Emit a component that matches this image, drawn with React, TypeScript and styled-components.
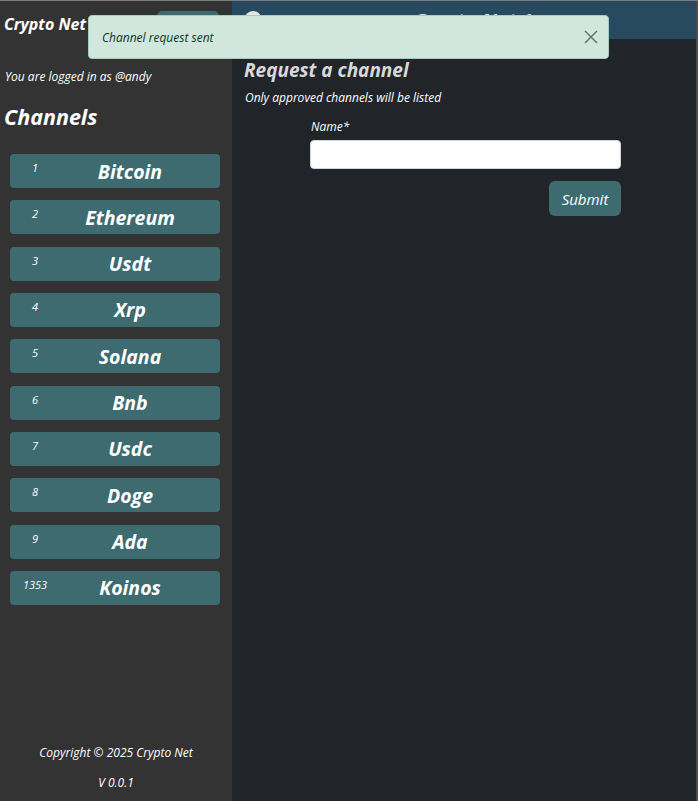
import React, {FC} from 'react';
import styled, {createGlobalStyle} from 'styled-components';

const GlobalStyle = createGlobalStyle`
  html, body {
    margin: 0;
    padding: 0;
    background: #212529;
  }
  body {
    font-family: "Open Sans", "Noto Sans", sans-serif;
    font-style: italic;
    color: #fff;
  }
  * { box-sizing: border-box; }
`;

const StyledPage = styled.div`
  position: relative;
  display: flex;
  height: 801px;
  border-top: 1px solid #7a7d80;
`;
const StyledSidebar = styled.aside`
  width: 232px;
  flex-shrink: 0;
  display: flex;
  flex-direction: column;
  background: #343333;
`;
const StyledBrandRow = styled.div`
  display: flex;
  align-items: center;
  justify-content: space-between;
  padding: 12px 13px 0 4px;
  height: 34px;
  > h1 {
    margin: 0;
    font-size: 16px;
    font-weight: 700;
  }
`;
const StyledSmallButton = styled.button`
  width: 62px;
  height: 26px;
  border: none;
  border-radius: 5px;
  background: #3d6b6f;
`;
const StyledLogged = styled.p`
  margin: 33px 0 0 5px;
  font-size: 12px;
`;
const StyledSideTitle = styled.h2`
  margin: 17px 0 0 4px;
  font-size: 21.5px;
  font-weight: 700;
`;
const StyledChannelList = styled.ul`
  list-style: none;
  margin: 23px 0 0;
  padding: 0 12px 0 10px;
  display: flex;
  flex-direction: column;
  gap: 12.33px;
`;
const StyledChannel = styled.li`
  display: grid;
  grid-template-columns: 50px 1fr;
  align-items: center;
  height: 34px;
  padding-right: 20px;
  border-radius: 4px;
  background: #3d6b6f;
  cursor: pointer;
  > span {
    align-self: start;
    padding-top: 6px;
    font-size: 11px;
    text-align: center;
  }
  > strong {
    text-align: center;
    font-size: 19.5px;
    font-weight: 700;
  }
`;
const StyledFooter = styled.footer`
  margin-top: auto;
  padding-bottom: 10px;
  text-align: center;
  font-size: 12px;
  > p {
    margin: 0 0 13px;
  }
  > p:last-child {
    margin: 0;
  }
`;
const StyledMain = styled.main`
  flex: 1;
  display: flex;
  flex-direction: column;
  border-right: 2px solid #4a4b4d;
`;
const StyledTopBar = styled.header`
  display: flex;
  align-items: center;
  height: 38px;
  padding: 0 12px;
  background: #284a60;
  > h1 {
    flex: 1;
    margin: 0;
    text-align: center;
    font-size: 20px;
    font-weight: 700;
    color: #e6e6e6;
  }
`;
const StyledAvatar = styled.div`
  width: 18px;
  height: 18px;
  border-radius: 50%;
  background: #e6e6e6;
`;
const StyledContent = styled.section`
  padding: 18px 12px;
  > h2 {
    margin: 0;
    font-size: 19px;
    font-weight: 700;
    color: #d9d9d9;
  }
  > p {
    margin: 6px 0 0 1px;
    font-size: 12px;
  }
`;
const StyledForm = styled.form`
  width: 311px;
  margin: 12px 0 0 66px;
  display: flex;
  flex-direction: column;
  > label {
    font-size: 12px;
    margin: 0 0 5px 1px;
  }
  > input {
    height: 29px;
    border: 1px solid #ced4da;
    border-radius: 4px;
    background: #fff;
  }
`;
const StyledSubmit = styled.button`
  align-self: flex-end;
  margin-top: 12px;
  width: 72px;
  height: 35px;
  border: none;
  border-radius: 6px;
  background: #3d6b6f;
  color: #fff;
  font-family: inherit;
  font-style: italic;
  font-size: 15px;
`;
const StyledToast = styled.div`
  position: absolute;
  left: 88px;
  top: 14px;
  width: 521px;
  height: 44px;
  display: flex;
  align-items: center;
  justify-content: space-between;
  padding: 0 10px 0 13px;
  border: 1px solid #a3cfbb;
  border-radius: 4px;
  background: #d1e7dd;
  color: #0a3622;
  font-size: 12px;
`;

type Channel = { id: number, name: string }

const channels: Channel[] = [
  {id: 1, name: 'Bitcoin'},
  {id: 2, name: 'Ethereum'},
  {id: 3, name: 'Usdt'},
  {id: 4, name: 'Xrp'},
  {id: 5, name: 'Solana'},
  {id: 6, name: 'Bnb'},
  {id: 7, name: 'Usdc'},
  {id: 8, name: 'Doge'},
  {id: 9, name: 'Ada'},
  {id: 1353, name: 'Koinos'},
];

const CloseIcon: FC = () => (
  <svg width="14" height="14" viewBox="0 0 14 14">
    <path d="M1 1L13 13M13 1L1 13" stroke="#5a6e64" strokeWidth="1.4" fill="none"/>
  </svg>
);

const App: FC = () => {
  return (
    <StyledPage>
      <GlobalStyle/>
      <StyledSidebar>
        <StyledBrandRow>
          <h1>Crypto Net</h1>
          <StyledSmallButton/>
        </StyledBrandRow>
        <StyledLogged>You are logged in as @andy</StyledLogged>
        <StyledSideTitle>Channels</StyledSideTitle>
        <StyledChannelList>
          {channels.map((item) => (
            <StyledChannel key={item.id}>
              <span>{item.id}</span>
              <strong>{item.name}</strong>
            </StyledChannel>
          ))}
        </StyledChannelList>
        <StyledFooter>
          <p>Copyright © 2025 Crypto Net</p>
          <p>V 0.0.1</p>
        </StyledFooter>
      </StyledSidebar>
      <StyledMain>
        <StyledTopBar>
          <StyledAvatar/>
          <h1>Crypto Net 1</h1>
        </StyledTopBar>
        <StyledContent>
          <h2>Request a channel</h2>
          <p>Only approved channels will be listed</p>
          <StyledForm onSubmit={(e) => e.preventDefault()}>
            <label>Name*</label>
            <input type="text"/>
            <StyledSubmit type="submit">Submit</StyledSubmit>
          </StyledForm>
        </StyledContent>
      </StyledMain>
      <StyledToast>
        <span>Channel request sent</span>
        <CloseIcon/>
      </StyledToast>
    </StyledPage>
  );
};

export default App;
